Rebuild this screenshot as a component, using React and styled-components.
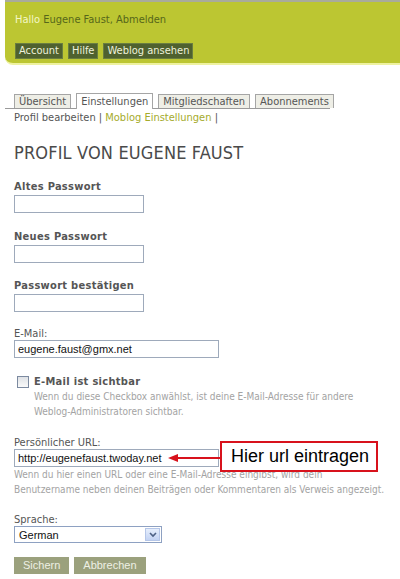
import styled, { createGlobalStyle } from "styled-components";

const GlobalStyle = createGlobalStyle`
  body {
    margin: 0;
    background: #fff;
    font-family: "DejaVu Sans Condensed", "DejaVu Sans", Verdana, sans-serif;
    font-stretch: condensed;
    font-size: 11px;
    color: #555;
  }
`;

const Page = styled.div`
  width: 400px;
  height: 579px;
  overflow: hidden;
`;

const Header = styled.div`
  margin-left: 5px;
  height: 65px;
  box-sizing: border-box;
  background: #bcc632;
  border-top: 2px solid #a9ab9c;
  border-bottom: 2px solid #eef2a0;
  border-bottom-left-radius: 8px;
  padding: 11px 0 0 10px;
`;

const Greeting = styled.div`
  font-size: 11px;
  line-height: 14px;
  color: #56661a;
  span {
    color: #f4f7c6;
  }
`;

const NavRow = styled.div`
  display: flex;
  gap: 5px;
  margin-top: 16px;
`;

const NavButton = styled.span`
  background: #4f612f;
  color: #eef1dc;
  padding: 0 3px;
  font-size: 11px;
  line-height: 14px;
  border: 1px solid #6a7e40;
`;

const Content = styled.div`
  padding: 28px 0 0 14px;
`;

const Tabs = styled.div`
  display: flex;
  align-items: flex-end;
  gap: 5px;
  width: 316px;
  margin-left: -9px;
  padding-left: 9px;
  border-bottom: 1px solid #9a9a9a;
`;

const Tab = styled.span`
  border: 1px solid #a5a5a5;
  border-bottom: none;
  background: ${(p) => (p.$active ? "#fff" : "#eeeee6")};
  color: #555;
  font-size: 11px;
  line-height: 13px;
  padding: ${(p) => (p.$active ? "1px 4px 1px" : "0 4px")};
  margin-bottom: ${(p) => (p.$active ? "-1px" : "0")};
`;

const SubNav = styled.div`
  margin-top: 2px;
  line-height: 14px;
  color: #555;
  a {
    color: #a5ab2c;
  }
`;

const Title = styled.h1`
  margin: 17px 0 0;
  font-size: 18px;
  line-height: 22px;
  font-weight: normal;
  color: #4a4a4a;
  letter-spacing: 0.15px;
`;

const Field = styled.div`
  margin-top: ${(p) => p.$top || "16px"};
`;

const BoldLabel = styled.div`
  font-weight: bold;
  color: #555;
  font-size: 11px;
  letter-spacing: 0.3px;
  line-height: 13px;
  margin-bottom: 2px;
`;

const Label = styled.div`
  color: #555;
  line-height: 13px;
`;

const Input = styled.input`
  display: block;
  box-sizing: border-box;
  width: ${(p) => p.$w || "130px"};
  height: 18px;
  margin: 0;
  border: 1px solid #9eaabb;
  padding: 0 3px;
  font-family: "Liberation Sans", Arial, sans-serif;
  font-size: 11px;
  color: #111;
  outline: none;
`;

const CheckRow = styled.div`
  display: flex;
  align-items: center;
  gap: 5px;
  margin: 17px 0 0 3px;
  height: 13px;
`;

const Box = styled.span`
  width: 10px;
  height: 10px;
  border: 1px solid #7c8aa0;
  background: linear-gradient(#dfe2e6, #fafafa);
`;

const Help = styled.div`
  color: #a3a3a3;
  font-size: 10px;
  line-height: 15px;
  white-space: nowrap;
  margin-left: ${(p) => p.$indent || "0"};
  margin-top: ${(p) => p.$top || "0"};
`;

const UrlRow = styled.div`
  position: relative;
`;

const Callout = styled.div`
  position: absolute;
  left: 206px;
  top: -8px;
  width: 145px;
  height: 27px;
  border: 2px solid #d8121c;
  background: #fff;
  font-family: "Liberation Sans", Arial, sans-serif;
  font-size: 18px;
  color: #000;
  display: flex;
  align-items: center;
  padding-left: 9px;
`;

const Arrow = styled.svg`
  position: absolute;
  left: 154px;
  top: 4px;
`;

const Select = styled.div`
  box-sizing: border-box;
  width: 148px;
  height: 17px;
  border: 1px solid #8ea1c2;
  display: flex;
  align-items: center;
  justify-content: space-between;
  padding-left: 4px;
  font-family: "Liberation Sans", Arial, sans-serif;
  font-size: 11px;
  color: #111;
`;

const SelectBtn = styled.span`
  width: 15px;
  height: 13px;
  margin-right: 1px;
  background: linear-gradient(#e6eefc, #c3d3f3);
  border: 1px solid #b5c6e8;
  box-sizing: border-box;
  display: flex;
  align-items: center;
  justify-content: center;
`;

const Buttons = styled.div`
  display: flex;
  gap: 5px;
  margin-top: 14px;
`;

const Button = styled.span`
  background: #9ba17d;
  color: #eef0e4;
  font-family: "Liberation Sans", Arial, sans-serif;
  font-size: 11px;
  height: 17px;
  line-height: 17px;
  padding: 0 9px;
`;

const App = () => {
  return (
    <Page>
      <GlobalStyle />
      <Header>
        <Greeting>
          <span>Hallo</span> Eugene Faust, Abmelden
        </Greeting>
        <NavRow>
          <NavButton>Account</NavButton>
          <NavButton>Hilfe</NavButton>
          <NavButton>Weblog ansehen</NavButton>
        </NavRow>
      </Header>
      <Content>
        <Tabs>
          <Tab>Übersicht</Tab>
          <Tab $active>Einstellungen</Tab>
          <Tab>Mitgliedschaften</Tab>
          <Tab>Abonnements</Tab>
        </Tabs>
        <SubNav>
          Profil bearbeiten | <a>Moblog Einstellungen</a> |
        </SubNav>
        <Title>PROFIL VON EUGENE FAUST</Title>

        <Field>
          <BoldLabel>Altes Passwort</BoldLabel>
          <Input type="password" />
        </Field>
        <Field $top="17px">
          <BoldLabel>Neues Passwort</BoldLabel>
          <Input type="password" />
        </Field>
        <Field>
          <BoldLabel>Passwort bestätigen</BoldLabel>
          <Input type="password" />
        </Field>

        <Field $top="15px">
          <Label>E-Mail:</Label>
          <Input $w="205px" defaultValue="eugene.faust@gmx.net" />
        </Field>

        <CheckRow>
          <Box />
          <BoldLabel as="span" style={{ margin: 0 }}>E-Mail ist sichtbar</BoldLabel>
        </CheckRow>
        <Help $indent="20px" $top="1px">
          Wenn du diese Checkbox anwählst, ist deine E-Mail-Adresse für andere
          <br />
          Weblog-Administratoren sichtbar.
        </Help>

        <Field $top="17px">
          <Label>Persönlicher URL:</Label>
          <UrlRow>
            <Input $w="205px" defaultValue="http://eugenefaust.twoday.net" />
            <Arrow width="52" height="10" viewBox="0 0 52 10">
              <line x1="8" y1="5" x2="52" y2="5" stroke="#d8121c" strokeWidth="2" />
              <polygon points="0,5 10,1 10,9" fill="#d8121c" />
            </Arrow>
            <Callout>Hier url eintragen</Callout>
          </UrlRow>
        </Field>
        <Help>
          Wenn du hier einen URL oder eine E-Mail-Adresse eingibst, wird dein
          <br />
          Benutzername neben deinen Beiträgen oder Kommentaren als Verweis angezeigt.
        </Help>

        <Field>
          <Label>Sprache:</Label>
          <Select>
            German
            <SelectBtn>
              <svg width="8" height="6" viewBox="0 0 8 6">
                <path d="M1 1 L4 4 L7 1" stroke="#4d6185" strokeWidth="1.6" fill="none" />
              </svg>
            </SelectBtn>
          </Select>
        </Field>

        <Buttons>
          <Button>Sichern</Button>
          <Button>Abbrechen</Button>
        </Buttons>
      </Content>
    </Page>
  );
};

export default App;
